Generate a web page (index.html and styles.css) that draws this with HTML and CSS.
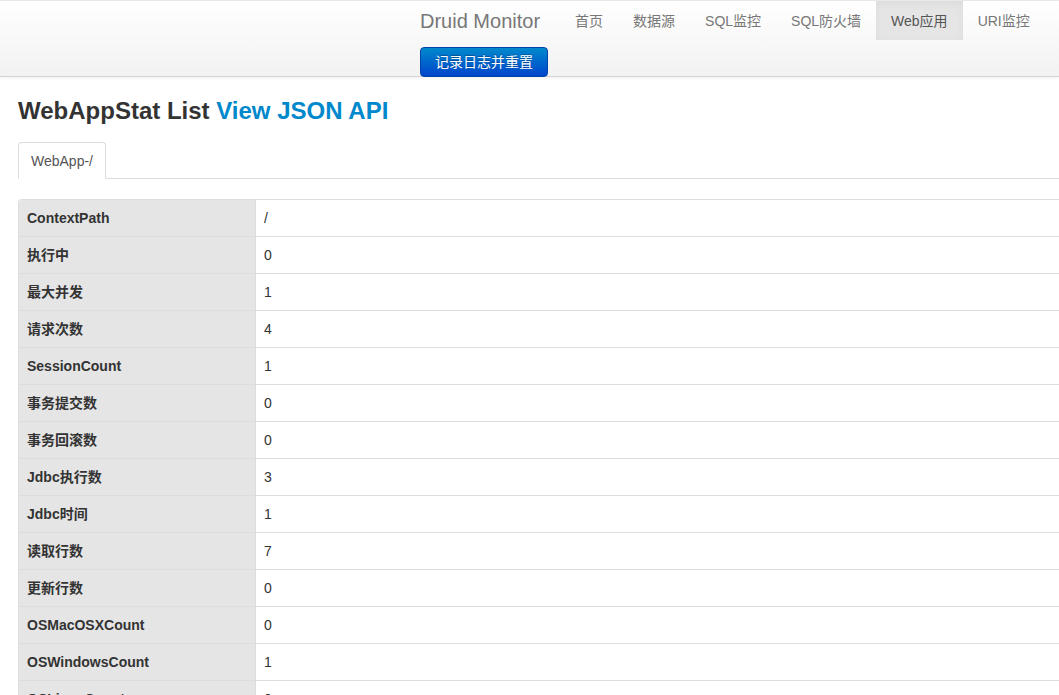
FILE: index.html
```
<!DOCTYPE html>
<html>
<head>
<meta charset="utf-8">
<link rel="stylesheet" href="styles.css">
</head>
<body>
<div class="navbar">
  <div class="navbar-inner">
    <div class="nav-row">
      <a class="brand">Druid Monitor</a>
      <ul class="nav">
        <li><a>首页</a></li>
        <li><a>数据源</a></li>
        <li><a>SQL监控</a></li>
        <li><a>SQL防火墙</a></li>
        <li class="active"><a>Web应用</a></li>
        <li><a>URI监控</a></li>
      </ul>
    </div>
    <div class="btn-row">
      <a class="btn-primary">记录日志并重置</a>
    </div>
  </div>
</div>
<div class="container">
  <h3 class="title">WebAppStat List <a class="json-link">View JSON API</a></h3>
  <ul class="tabs">
    <li class="tab active"><a>WebApp-/</a></li>
  </ul>
  <table class="stat">
    <tbody>
      <tr><th>ContextPath</th><td>/</td></tr>
      <tr><th>执行中</th><td>0</td></tr>
      <tr><th>最大并发</th><td>1</td></tr>
      <tr><th>请求次数</th><td>4</td></tr>
      <tr><th>SessionCount</th><td>1</td></tr>
      <tr><th>事务提交数</th><td>0</td></tr>
      <tr><th>事务回滚数</th><td>0</td></tr>
      <tr><th>Jdbc执行数</th><td>3</td></tr>
      <tr><th>Jdbc时间</th><td>1</td></tr>
      <tr><th>读取行数</th><td>7</td></tr>
      <tr><th>更新行数</th><td>0</td></tr>
      <tr><th>OSMacOSXCount</th><td>0</td></tr>
      <tr><th>OSWindowsCount</th><td>1</td></tr>
      <tr><th>OSLinuxCount</th><td>0</td></tr>
    </tbody>
  </table>
</div>
</body>
</html>
```
FILE: styles.css
```
html, body {
  margin: 0;
  padding: 0;
  overflow: hidden;
  background: #fff;
}
body {
  font-family: "Liberation Sans", Arial, "Noto Sans CJK SC", sans-serif;
  font-size: 14px;
  line-height: 20px;
  color: #333;
  width: 1059px;
  height: 695px;
}
a { text-decoration: none; cursor: pointer; }

.navbar-inner {
  background: linear-gradient(to bottom, #ffffff, #f2f2f2);
  border-top: 1px solid #e8e8e8;
  border-bottom: 1px solid #d4d4d4;
  box-shadow: 0 1px 4px rgba(0,0,0,0.065);
  padding-left: 420px;
  box-sizing: border-box;
  height: 77px;
}
.nav-row {
  display: flex;
  white-space: nowrap;
  height: 40px;
}
.brand {
  font-size: 20px;
  line-height: 20px;
  color: #777;
  padding: 10px 20px 9px 0;
}
.nav {
  display: flex;
  list-style: none;
  margin: 0;
  padding: 0;
}
.nav li a {
  display: block;
  padding: 10px 15px 9px;
  color: #777;
  line-height: 20px;
}
.nav li.active a {
  background: #e5e5e5;
  color: #555;
  box-shadow: inset 0 3px 8px rgba(0,0,0,0.04);
}
.btn-row {
  padding-top: 6px;
}
.btn-primary {
  display: inline-block;
  box-sizing: border-box;
  height: 30px;
  width: 128px;
  text-align: center;
  padding: 4px 0;
  color: #fff;
  background: linear-gradient(to bottom, #0088cc, #0044cc);
  border: 1px solid #0044aa;
  border-radius: 4px;
  text-shadow: 0 -1px 0 rgba(0,0,0,0.25);
  line-height: 20px;
}

.container {
  padding: 12px 0 0 18px;
}
.title {
  font-size: 24px;
  line-height: 40px;
  font-weight: bold;
  padding-top: 2px;
  margin: 0 0 11px;
  color: #333;
}
.json-link { color: #0088cc; }

.tabs {
  list-style: none;
  margin: 0 0 20px;
  padding: 0;
  border-bottom: 1px solid #ddd;
  display: flex;
}
.tab a {
  display: block;
  padding: 8px 12px 7px;
  line-height: 20px;
  color: #555;
  border: 1px solid #ddd;
  border-bottom-color: transparent;
  border-radius: 4px 4px 0 0;
  margin-bottom: -1px;
  background: #fff;
}

.stat {
  width: 1200px;
  border-collapse: separate;
  border-spacing: 0;
  border: 1px solid #ddd;
  border-right: none;
  border-radius: 4px 0 0 0;
}
.stat th, .stat td {
  padding: 8px;
  line-height: 20px;
  text-align: left;
  border-top: 1px solid #ddd;
  vertical-align: top;
}
.stat tr:first-child th, .stat tr:first-child td { border-top: none; }
.stat th {
  width: 220px;
  background: #e5e5e5;
  font-weight: bold;
  color: #333;
}
.stat tr:first-child th { border-radius: 4px 0 0 0; }
.stat td {
  border-left: 1px solid #ddd;
  color: #333;
}
```
